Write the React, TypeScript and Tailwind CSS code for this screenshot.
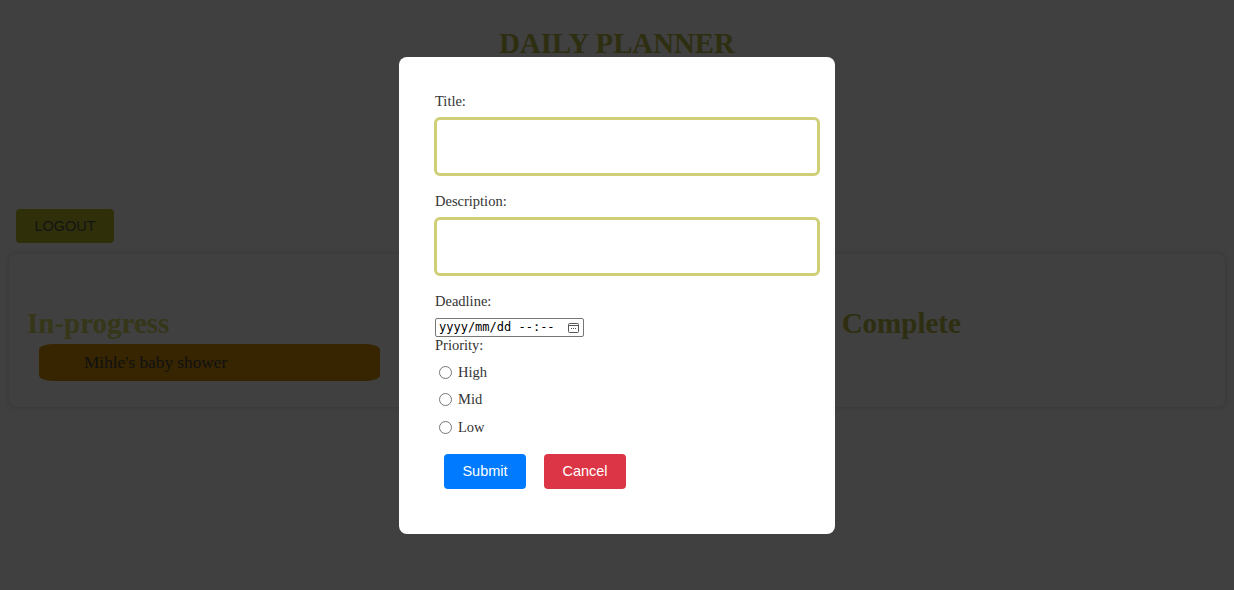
import { useState } from 'react';

const serif = { fontFamily: '"Liberation Serif", "Times New Roman", serif' };

/**
 * Add-task modal sitting over the planner board
 */
function TaskModal() {
  const [priority, setPriority] = useState('');

  return (
    <div className="fixed inset-0 flex items-center justify-center">
      <div
        className="w-[436px] h-[477px] bg-white rounded-[8px] pt-[36px] pl-[35px] pr-[15px] text-[14.5px] text-[#333] leading-[17px]"
        style={serif}
      >
        <label className="block pl-[1px]">Title:</label>
        <div className="mt-[7px] h-[59px] border-[3px] border-[#cfcf78] rounded-[6px]" />

        <label className="block pl-[1px] mt-[17px]">Description:</label>
        <div className="mt-[7px] h-[59px] border-[3px] border-[#cfcf78] rounded-[6px]" />

        <label className="block pl-[1px] mt-[17px]">Deadline:</label>
        <div className="mt-[8px] ml-[1px] w-[149px] h-[19px] border border-[#767676] rounded-[2px] flex items-center justify-between pl-[3px] pr-[4px]">
          <span className="text-[12px] leading-none text-black whitespace-pre" style={{ fontFamily: '"DejaVu Sans Mono", monospace' }}>
            yyyy/mm/dd --:--
          </span>
          <svg width="11" height="11" viewBox="0 0 11 11" fill="none" stroke="#555" strokeWidth="1">
            <rect x="0.5" y="1.5" width="10" height="9" rx="1" />
            <line x1="0.5" y1="3.5" x2="10.5" y2="3.5" />
            <rect x="3" y="6" width="1" height="1" fill="#555" stroke="none" />
            <rect x="5" y="6" width="1" height="1" fill="#555" stroke="none" />
            <rect x="7" y="6" width="1" height="1" fill="#555" stroke="none" />
          </svg>
        </div>

        <label className="block pl-[1px]">Priority:</label>
        <div className="mt-[10px] flex flex-col gap-[10.5px]">
          {['High', 'Mid', 'Low'].map((p) => (
            <label key={p} className="flex items-center h-[17px]">
              <input
                type="radio"
                name="priority"
                checked={priority === p}
                onChange={() => setPriority(p)}
                className="ml-[5px] mr-[6px] w-[13px] h-[13px]"
              />
              {p}
            </label>
          ))}
        </div>

        <div className="mt-[18px] ml-[10px] flex gap-[18px]" style={{ fontFamily: '"Liberation Sans", Arial, sans-serif' }}>
          <button className="w-[82px] h-[35px] bg-[#007bff] text-white rounded-[4px] text-[14.5px]">Submit</button>
          <button className="w-[82px] h-[35px] bg-[#dc3545] text-white rounded-[4px] text-[14.5px]">Cancel</button>
        </div>
      </div>
    </div>
  );
}

export default function App() {
  return (
    <div className="min-h-[590px] bg-[#404040] px-[8px] pt-[25px]" style={serif}>
      <h1 className="text-center text-[28.8px] font-bold leading-[36px] text-[#2e2e10]">DAILY PLANNER</h1>

      <div className="mt-[148px] ml-[8px]">
        <button
          className="w-[98px] h-[34px] rounded-[4px] bg-[#2f2f0a] text-[#141414] text-[14.5px] pt-[1px]"
          style={{ fontFamily: '"Liberation Sans", Arial, sans-serif' }}
        >
          LOGOUT
        </button>
      </div>

      <div className="mt-[10px] h-[155px] rounded-[8px] border border-[#3b3b3b] shadow-[0_0_4px_rgba(0,0,0,0.12)] grid grid-cols-3">
        <div className="pl-[18px] pt-[51px]">
          <h2 className="text-[29px] font-bold leading-[36px] text-[#363618]">In-progress</h2>
          <div className="ml-[12px] mt-[3px] w-[341px] h-[37px] bg-[#362500] rounded-[14px/6px] flex items-center pl-[45px] text-[17.3px] text-[#111]">
            Mihle's baby shower
          </div>
        </div>
        <div className="pl-[18px] pt-[51px]">
          <h2 className="text-[29px] font-bold leading-[36px] text-[#363618]">Todo</h2>
        </div>
        <div className="pl-[22px] pt-[51px]">
          <h2 className="text-[29px] font-bold leading-[36px] text-[#2e2e10]">Complete</h2>
        </div>
      </div>

      <TaskModal />
    </div>
  );
}
